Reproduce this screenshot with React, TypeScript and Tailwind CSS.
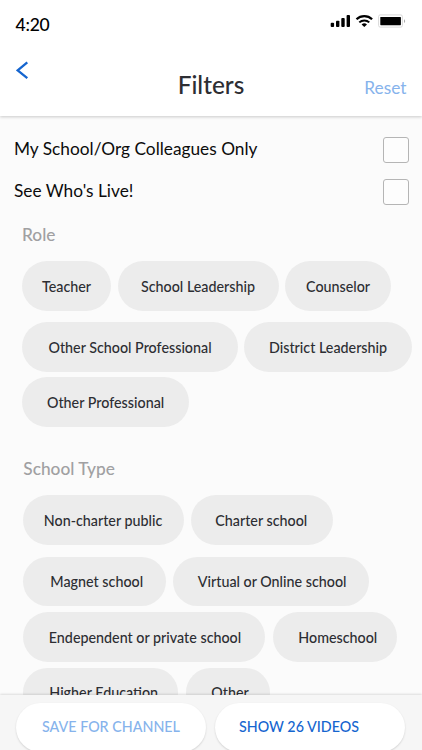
import { useState } from 'react';
import clsx from 'clsx';

type Chip = { label: string; size: string };

// size: chip width and inner left padding
const roleRows: Chip[][] = [
  [
    { label: 'Teacher', size: 'w-[89px] pl-[20px]' },
    { label: 'School Leadership', size: 'w-[161px] pl-[23.5px]' },
    { label: 'Counselor', size: 'w-[106px] pl-[21px]' },
  ],
  [
    { label: 'Other School Professional', size: 'w-[216px] pl-[26.5px]' },
    { label: 'District Leadership', size: 'w-[167.5px] pl-[25px]' },
  ],
  [{ label: 'Other Professional', size: 'w-[167px] pl-[25px]' }],
];

const schoolRows: Chip[][] = [
  [
    { label: 'Non-charter public', size: 'w-[161px] pl-[20.5px]' },
    { label: 'Charter school', size: 'w-[142px] pl-[24px]' },
  ],
  [
    { label: 'Magnet school', size: 'w-[142.5px] pl-[27px]' },
    { label: 'Virtual or Online school', size: 'w-[196.5px] pl-[25px]' },
  ],
  [
    { label: 'Endependent or private school', size: 'w-[241.5px] pl-[25.5px]' },
    { label: 'Homeschool', size: 'w-[124.5px] pl-[25.5px]' },
  ],
  [
    { label: 'Higher Education', size: 'w-[154.5px] pl-[26px]' },
    { label: 'Other', size: 'w-[83.5px] pl-[25px]' },
  ],
];

function StatusIcons() {
  return (
    <svg width="76" height="16" viewBox="0 0 76 16" fill="none">
      <g fill="#000">
        <rect x="0.7" y="8.8" width="3.4" height="4.2" rx="0.9" />
        <rect x="6" y="6.7" width="3.4" height="6.3" rx="0.9" />
        <rect x="11.3" y="4" width="3.4" height="9" rx="0.9" />
        <rect x="16.6" y="1" width="3.4" height="12" rx="0.9" />
        <path d="M34.3 13.1 31.6 10.5a4 4 0 0 1 5.4 0z" />
      </g>
      <path d="M26.5 5.2a11.4 11.4 0 0 1 15.6 0" stroke="#000" strokeWidth="2.2" />
      <path d="M29.3 8.4a7.2 7.2 0 0 1 10 0" stroke="#000" strokeWidth="2" />
      <rect x="48.6" y="0.9" width="23.8" height="12.2" rx="1.6" stroke="#d9d9d9" />
      <rect x="50.3" y="3" width="20.6" height="8.2" rx="0.6" fill="#000" />
      <path d="M74.2 5.2c1.2.5 1.2 3.3 0 3.8z" fill="#999" />
    </svg>
  );
}

function ChipButton({ label, size }: Chip) {
  const [active, setActive] = useState(false);
  return (
    <button
      type="button"
      onClick={() => setActive(!active)}
      className={clsx(
        'h-[49.5px] shrink-0 rounded-full pt-[1px] text-left text-[14.3px] font-medium whitespace-nowrap text-[#2d2e33]',
        size,
        active ? 'bg-[#cfe0f8]' : 'bg-[#ececec]'
      )}
    >
      {label}
    </button>
  );
}

function CheckRow({ label }: { label: string }) {
  const [checked, setChecked] = useState(false);
  return (
    <label className="flex items-start justify-between pr-[13px] pl-[14px] text-[17.3px] leading-[24px] text-[#0c0c0c]">
      <span>{label}</span>
      <input
        type="checkbox"
        checked={checked}
        onChange={() => setChecked(!checked)}
        className="h-[26px] w-[26px] appearance-none rounded-[3px] border border-[#b5b5b5] bg-[#fdfdfd] checked:bg-[#1766d1]"
      />
    </label>
  );
}

export default function App() {
  return (
    <div className="flex h-[750px] w-[422px] flex-col overflow-hidden bg-[#fbfbfb] font-['Lato','Liberation_Sans',sans-serif]">
      <header className="z-10 h-[116px] shrink-0 bg-white shadow-[0_1px_3px_rgba(0,0,0,0.2)]">
        <div className="flex h-[50px] justify-between pt-[14px] pr-[16px] pl-[15.5px]">
          <span className="text-[17.5px] leading-[21px] font-medium tracking-[-0.2px] text-black">4:20</span>
          <StatusIcons />
        </div>
        <div className="grid h-[66px] grid-cols-[1fr_auto_1fr] pr-[15.5px] pl-[15.5px]">
          <button type="button" aria-label="Back" className="flex h-[40px] w-[20px] pt-[11px]">
            <svg width="14" height="18" viewBox="0 0 14 18" fill="none">
              <path d="M11.3 1.4 1.7 9.3l9.6 7.8" stroke="#1565cf" strokeWidth="2.3" />
            </svg>
          </button>
          <h1 className="pt-[19px] text-[24.4px] leading-[32px] font-medium text-[#2d2e33]">Filters</h1>
          <button type="button" className="h-[50px] pt-[25px] text-right text-[17.3px] leading-[25px] text-[#86b3ec]">
            Reset
          </button>
        </div>
      </header>

      <main className="min-h-0 flex-1 overflow-hidden">
        <div className="flex h-[105px] flex-col gap-[16px] pt-[21px]">
          <CheckRow label="My School/Org Colleagues Only" />
          <CheckRow label="See Who's Live!" />
        </div>

        <section className="pl-[22px]">
          <h2 className="h-[40px] pt-[1px] text-[17.3px] leading-[25px] font-medium text-[#a0a0a2]">Role</h2>
          <div className="flex flex-col">
            <div className="mb-[11.5px] flex gap-[6.5px]">
              {roleRows[0].map((c) => <ChipButton key={c.label} {...c} />)}
            </div>
            <div className="mb-[5.5px] flex gap-[6px]">
              {roleRows[1].map((c) => <ChipButton key={c.label} {...c} />)}
            </div>
            <div className="flex">
              {roleRows[2].map((c) => <ChipButton key={c.label} {...c} />)}
            </div>
          </div>
        </section>

        <section className="pt-[28px] pl-[23.3px]">
          <h2 className="h-[40.5px] pt-[1px] text-[17.3px] leading-[25px] font-medium text-[#a0a0a2]">School Type</h2>
          <div className="flex flex-col">
            <div className="mb-[12px] flex gap-[7px]">
              {schoolRows[0].map((c) => <ChipButton key={c.label} {...c} />)}
            </div>
            <div className="mb-[6px] flex gap-[7px]">
              {schoolRows[1].map((c) => <ChipButton key={c.label} {...c} />)}
            </div>
            <div className="mb-[6px] flex gap-[8px]">
              {schoolRows[2].map((c) => <ChipButton key={c.label} {...c} />)}
            </div>
            <div className="flex gap-[8.5px]">
              {schoolRows[3].map((c) => <ChipButton key={c.label} {...c} />)}
            </div>
          </div>
        </section>
      </main>

      <footer className="z-10 flex h-[55.5px] shrink-0 gap-[9px] bg-[#f6f6f6] pt-[8px] pl-[16px] shadow-[0_-1px_2px_rgba(0,0,0,0.12)]">
        <button
          type="button"
          className="h-[49px] w-[190px] rounded-full bg-white pl-[26px] text-left text-[14.3px] font-medium whitespace-nowrap text-[#86b3ec] shadow-[0_1px_2px_rgba(0,0,0,0.15)]"
        >
          SAVE FOR CHANNEL
        </button>
        <button
          type="button"
          className="h-[49px] w-[190px] rounded-full bg-white pl-[24px] text-left text-[14.3px] font-medium whitespace-nowrap text-[#1565cf] shadow-[0_1px_2px_rgba(0,0,0,0.15)]"
        >
          SHOW 26 VIDEOS
        </button>
      </footer>
    </div>
  );
}
